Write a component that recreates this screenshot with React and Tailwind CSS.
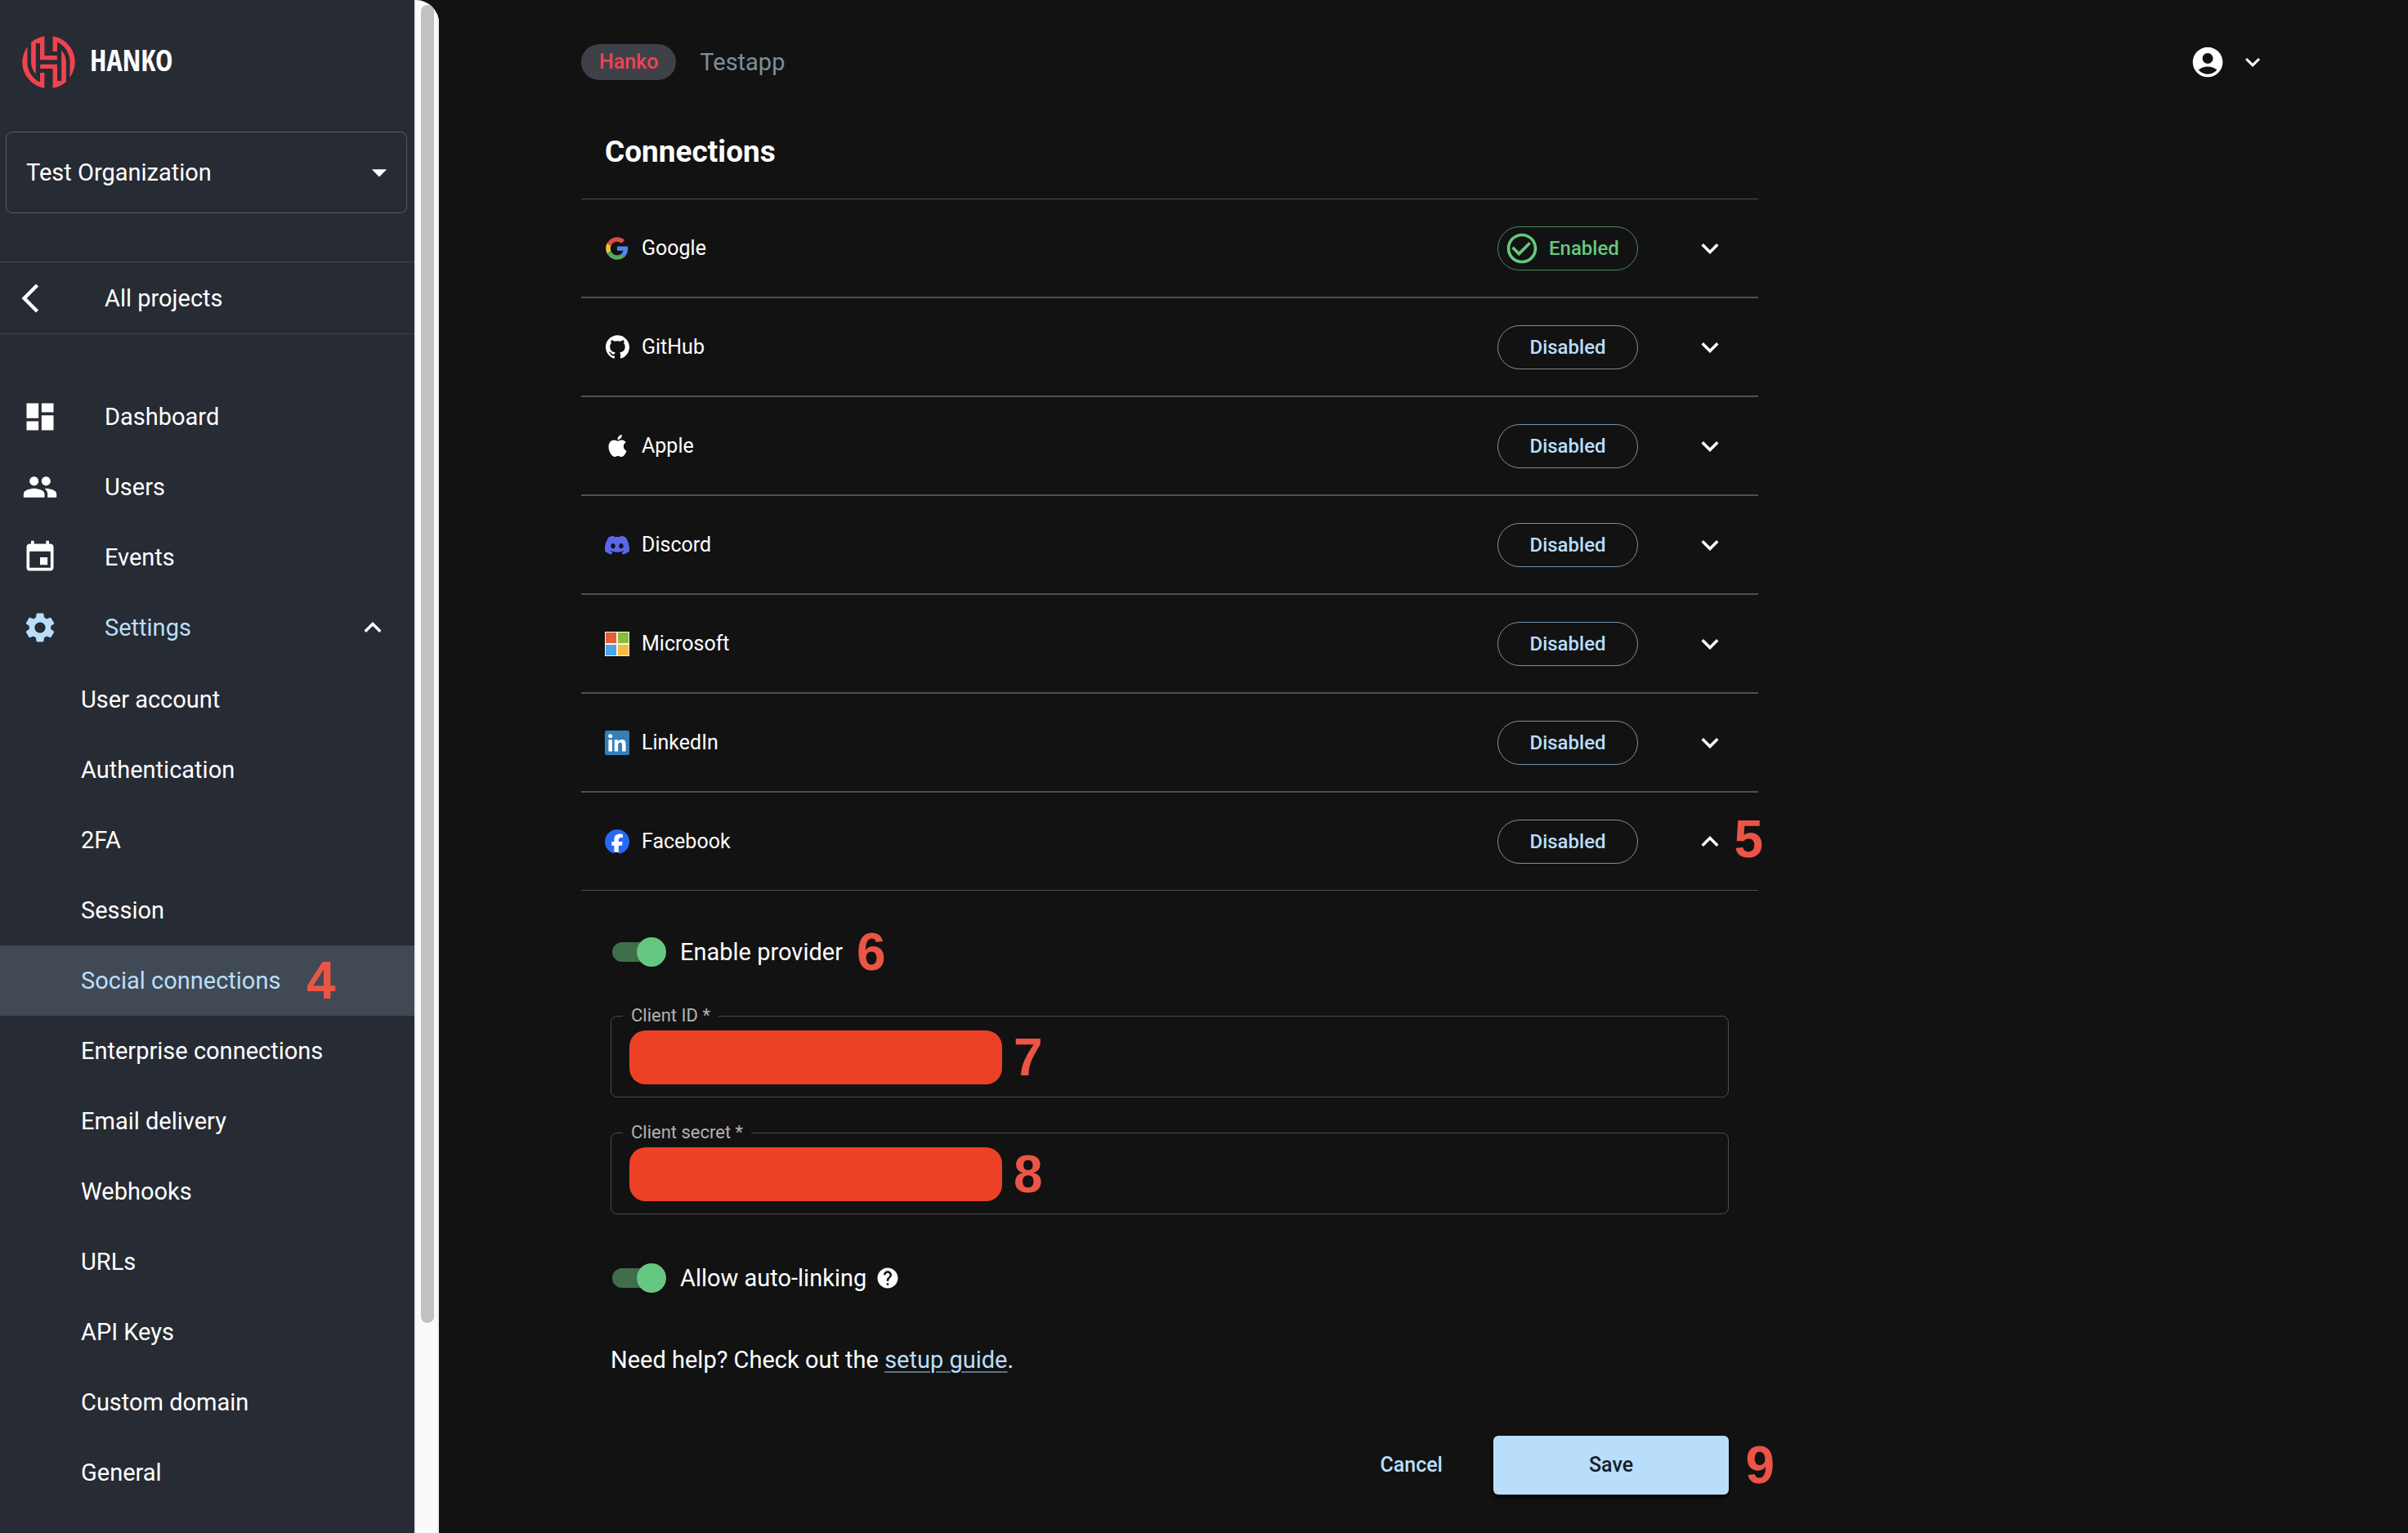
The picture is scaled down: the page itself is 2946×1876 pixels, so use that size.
import React, { useState } from "react";
import {
  MdAccountCircle,
  MdArrowBackIosNew,
  MdArrowDropDown,
  MdCheckCircleOutline,
  MdDashboard,
  MdEvent,
  MdExpandLess,
  MdExpandMore,
  MdHelp,
  MdPeople,
  MdSettings,
} from "react-icons/md";
import { SiApple, SiDiscord, SiFacebook, SiGithub } from "react-icons/si";

function HankoMark() {
  const half = (
    <>
      <path d="M6.6 13.3 A32.5 32 0 0 0 27.4 63.8 V45 H22 V56.6 A27 27 0 0 1 6.4 33 Z" />
      <path d="M11.1 7.8 A32.5 32 0 0 1 27.4 0.2 V24 H42.8 V29.2 H22 V9 H16.8 V46.8 A24 24 0 0 1 11.1 33 Z" />
    </>
  );
  return (
    <svg viewBox="0 0 65 64" className="h-16 w-[65px] fill-[#ef4350]" aria-hidden="true">
      {half}
      <g transform="rotate(180 32.5 32)">{half}</g>
    </svg>
  );
}

function GoogleIcon() {
  return (
    <svg viewBox="0 0 24 24" className="size-[30px]" aria-hidden="true">
      <path fill="#5086ec" d="M22.56 12.25c0-.78-.07-1.53-.2-2.25H12v4.26h5.92c-.26 1.37-1.04 2.53-2.21 3.31v2.77h3.57c2.08-1.92 3.28-4.74 3.28-8.09z" />
      <path fill="#58a55c" d="M12 23c2.97 0 5.46-.98 7.28-2.66l-3.57-2.77c-.98.66-2.23 1.06-3.71 1.06-2.86 0-5.29-1.93-6.16-4.53H2.18v2.84C3.99 20.53 7.7 23 12 23z" />
      <path fill="#f2be42" d="M5.84 14.09c-.22-.66-.35-1.36-.35-2.09s.13-1.43.35-2.09V7.07H2.18C1.43 8.55 1 10.22 1 12s.43 3.45 1.18 4.93l2.85-2.22.81-.62z" />
      <path fill="#d95040" d="M12 5.38c1.62 0 3.06.56 4.21 1.64l3.15-3.15C17.45 2.09 14.97 1 12 1 7.7 1 3.99 3.47 2.18 7.07l3.66 2.84c.87-2.6 3.3-4.53 6.16-4.53z" />
    </svg>
  );
}

function MicrosoftIcon() {
  return (
    <svg viewBox="0 0 30 30" className="size-[30px]" aria-hidden="true">
      <rect width="30" height="30" fill="#f5f3ee" />
      <rect x="1" y="1" width="13" height="13" fill="#e25f38" />
      <rect x="16" y="1" width="13" height="13" fill="#8fba3c" />
      <rect x="1" y="16" width="13" height="13" fill="#4ba4ea" />
      <rect x="16" y="16" width="13" height="13" fill="#f5bc42" />
    </svg>
  );
}

function LinkedInIcon() {
  return (
    <svg viewBox="0 0 24 24" className="size-[30px]" aria-hidden="true">
      <rect width="24" height="24" rx="2" fill="#337fb7" />
      <path
        fill="#fff"
        d="M20.447 20.452h-3.554v-5.569c0-1.328-.027-3.037-1.852-3.037-1.853 0-2.136 1.445-2.136 2.939v5.667H9.351V9h3.414v1.561h.046c.477-.9 1.637-1.85 3.37-1.85 3.601 0 4.267 2.37 4.267 5.455v6.286zM5.337 7.433c-1.144 0-2.063-.926-2.063-2.065 0-1.138.92-2.063 2.063-2.063 1.14 0 2.064.925 2.064 2.063 0 1.139-.925 2.065-2.064 2.065zm1.782 13.019H3.555V9h3.564v11.452z"
      />
    </svg>
  );
}

const mainNav = [
  { label: "Dashboard", Icon: MdDashboard },
  { label: "Users", Icon: MdPeople },
  { label: "Events", Icon: MdEvent },
];

const settingsNav = [
  "User account",
  "Authentication",
  "2FA",
  "Session",
  "Social connections",
  "Enterprise connections",
  "Email delivery",
  "Webhooks",
  "URLs",
  "API Keys",
  "Custom domain",
  "General",
];

const providers = [
  { name: "Google", icon: <GoogleIcon />, enabled: true },
  { name: "GitHub", icon: <SiGithub className="size-[29px]" /> },
  { name: "Apple", icon: <SiApple className="size-[27px]" /> },
  { name: "Discord", icon: <SiDiscord className="size-[30px] text-[#5b67e9]" /> },
  { name: "Microsoft", icon: <MicrosoftIcon /> },
  { name: "LinkedIn", icon: <LinkedInIcon /> },
  {
    name: "Facebook",
    icon: (
      <span className="rounded-full bg-[radial-gradient(white_60%,transparent_62%)]">
        <SiFacebook className="size-[30px] text-[#2769f5]" />
      </span>
    ),
    open: true,
    step: "5",
  },
];

// Numbered callout laid over the interface.
function Step({ n, className }) {
  return (
    <span
      className={`pointer-events-none absolute inset-y-0 flex items-center font-['Liberation_Sans',sans-serif] text-[64px] leading-none font-bold text-[#eb5545] ${className}`}
    >
      {n}
    </span>
  );
}

function Sidebar() {
  return (
    <div className="flex w-[537px] shrink-0 overflow-hidden rounded-tr-[28px] bg-[#fafafa]">
      <aside className="w-[507px] bg-[#272b33] pt-11">
        <div className="flex h-16 items-center gap-[18px] pl-[27px]">
          <HankoMark />
          <span className="pb-1 font-['Open_Sans_Condensed','Open_Sans',sans-serif] text-[36px] leading-none font-bold">HANKO</span>
        </div>

        <div className="relative mt-[53px] mr-[9px] ml-[7px]">
          <select
            aria-label="Organization"
            className="block h-[100px] w-full appearance-none rounded-lg border border-[#575b62] bg-transparent px-6 text-[29px]"
          >
            <option>Test Organization</option>
          </select>
          <MdArrowDropDown className="pointer-events-none absolute top-7 right-3 size-11" />
        </div>

        <a href="#projects" className="mt-[59px] flex h-[89px] items-center border-y border-[#43474e] pl-4">
          <MdArrowBackIosNew className="mr-[70px] size-[42px]" />
          All projects
        </a>

        <nav className="mt-[58px]">
          {mainNav.map(({ label, Icon }) => (
            <a key={label} href={`#${label}`} className="flex h-[86px] items-center gap-[57px] pl-[27px]">
              <Icon className="size-11" />
              {label}
            </a>
          ))}
          <button type="button" aria-expanded="true" className="flex h-[86px] w-full items-center pr-[30px] pl-[27px] text-[#b9defc]">
            <MdSettings className="mr-[57px] size-11" />
            Settings
            <MdExpandLess className="ml-auto size-[42px] text-white" />
          </button>
          <ul className="mt-0.5">
            {settingsNav.map((label) => {
              const active = label === "Social connections";
              return (
                <li key={label} className="relative">
                  <a
                    href={`#${label}`}
                    aria-current={active ? "page" : undefined}
                    className={`flex h-[86px] items-center pl-[99px] ${active ? "bg-[#404954] text-[#b9defc]" : ""}`}
                  >
                    {label}
                  </a>
                  {active && <Step n="4" className="left-[375px]" />}
                </li>
              );
            })}
          </ul>
        </nav>
      </aside>
      <div className="flex-1 border-x-2 border-[#ececef] pt-1.5" aria-hidden="true">
        <div className="mx-auto mr-1 h-[1613px] w-4 rounded-full bg-[#c1c1c1]" />
      </div>
    </div>
  );
}

function StatusChip({ enabled }) {
  return enabled ? (
    <span className="flex h-[54px] w-[172px] items-center gap-[11px] rounded-full border border-[#468a58] pl-[7px] text-2xl font-medium text-[#66c780]">
      <MdCheckCircleOutline className="size-11" />
      Enabled
    </span>
  ) : (
    <span className="flex h-[54px] w-[172px] items-center justify-center rounded-full border border-[#7990a3] text-2xl font-medium text-[#b9defc]">
      Disabled
    </span>
  );
}

function ProviderRow({ name, icon, enabled, open, step }) {
  const Chevron = open ? MdExpandLess : MdExpandMore;
  return (
    <li className="relative border-y border-[#4f4f4f]">
      <button type="button" aria-expanded={!!open} className="flex h-[119px] w-full items-center pr-[38px] pl-[29px] text-[25px]">
        <span className="flex w-[30px] justify-center">{icon}</span>
        <span className="ml-[15px]">{name}</span>
        <span className="mr-[67px] ml-auto">
          <StatusChip enabled={enabled} />
        </span>
        <Chevron className="size-[42px]" />
      </button>
      {step && <Step n={step} className="-right-1.5 pb-1.5" />}
    </li>
  );
}

function Switch({ id }) {
  const [on, setOn] = useState(true);
  return (
    <input
      id={id}
      type="checkbox"
      role="switch"
      checked={on}
      onChange={(e) => setOn(e.target.checked)}
      className="relative ml-0.5 h-9 w-[66px] shrink-0 appearance-none before:absolute before:inset-y-1.5 before:left-0 before:w-[61px] before:rounded-full before:bg-[#7a7a7a] after:absolute after:top-0 after:left-0 after:size-9 after:rounded-full after:bg-[#e0e0e0] after:shadow-md checked:before:bg-[#3f6e4b] checked:after:left-[30px] checked:after:bg-[#66c780]"
    />
  );
}

function SecretField({ id, label, step }) {
  return (
    <fieldset className="min-w-0 rounded-lg border border-[#4b4b4b] px-[14px] pb-[15px]">
      <legend className="h-6 px-[10px] text-[22px] leading-6 text-[#b3b3b3]">
        <label htmlFor={id}>{label} *</label>
      </legend>
      <div className="relative mt-1.5 ml-2">
        <input id={id} type="text" required className="block h-[66px] w-full bg-transparent text-[29px] outline-none" />
        <span className="pointer-events-none absolute inset-y-0 left-0 w-[456px] rounded-[20px] bg-[#ec4127]" />
        <Step n={step} className="left-[470px]" />
      </div>
    </fieldset>
  );
}

export default function App() {
  return (
    <div className="flex min-h-screen bg-[#121212] font-[Roboto,sans-serif] text-[29px] leading-9 text-white">
      <Sidebar />

      <div className="flex-1 pr-[172px] pl-[174px]">
        <header className="flex items-center pt-[54px]">
          <span className="flex h-11 items-center rounded-full bg-[#3f4149] px-[22px] text-[25px] font-medium text-[#ef4350]">Hanko</span>
          <span className="ml-[29px] text-[#7d8e9c]">Testapp</span>
          <button type="button" aria-label="Account menu" className="ml-auto flex items-center gap-[15px]">
            <MdAccountCircle className="size-11" />
            <MdExpandMore className="size-9" />
          </button>
        </header>

        <main className="max-w-[1440px] pb-[46px]">
          <h2 className="mt-[66px] mb-[35px] pl-[29px] text-[37px] leading-[44px] font-bold">Connections</h2>
          <ul>
            {providers.map((p) => (
              <ProviderRow key={p.name} {...p} />
            ))}
          </ul>

          <form className="px-9 pt-[57px]" onSubmit={(e) => e.preventDefault()}>
            <div className="relative flex items-center gap-[17px]">
              <Switch id="enable-provider" />
              <label htmlFor="enable-provider">Enable provider</label>
              <Step n="6" className="left-[301px]" />
            </div>

            <div className="mt-12 flex flex-col gap-[31px]">
              <SecretField id="client-id" label="Client ID" step="7" />
              <SecretField id="client-secret" label="Client secret" step="8" />
            </div>

            <div className="mt-[60px] flex items-center gap-[17px]">
              <Switch id="auto-linking" />
              <label htmlFor="auto-linking" className="flex items-center gap-[11px]">
                Allow auto-linking
                <MdHelp className="size-[30px]" />
              </label>
            </div>

            <p className="mt-16">
              Need help? Check out the{" "}
              <a href="#setup-guide" className="text-[#b9defc] underline decoration-[#5f7283] decoration-2 underline-offset-4">
                setup guide
              </a>
              .
            </p>

            <div className="relative mt-[75px] flex justify-end gap-[31px]">
              <button type="button" className="h-[72px] px-[31px] text-[25px] font-medium text-[#b9defc]">
                Cancel
              </button>
              <button type="submit" className="h-[72px] w-72 rounded-md bg-[#b9defc] text-[25px] font-medium text-[#15202a] shadow-md shadow-black">
                Save
              </button>
              <Step n="9" className="-right-14" />
            </div>
          </form>
        </main>
      </div>
    </div>
  );
}
